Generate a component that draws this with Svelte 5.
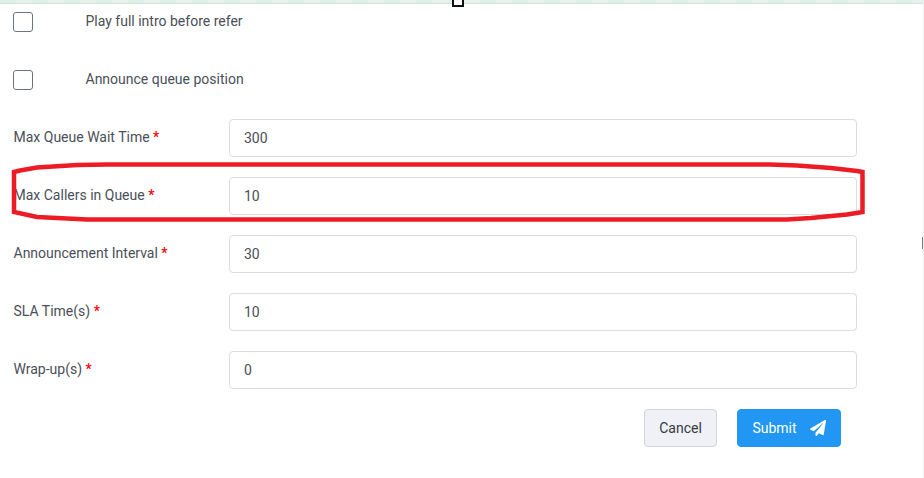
<script lang="ts">
  const options = ['Play full intro before refer', 'Announce queue position'];

  const fields = [
    { label: 'Max Queue Wait Time', value: '300' },
    { label: 'Max Callers in Queue', value: '10' },
    { label: 'Announcement Interval', value: '30' },
    { label: 'SLA Time(s)', value: '10' },
    { label: 'Wrap-up(s)', value: '0' }
  ];

  // hand-drawn annotation around the second field
  const outline =
    '14,172 20,170.5 37,167.5 77,165 107,164.5 770,164.5 797,165.5 831,168 857,171 862.5,172 862.5,212 847,214.5 811,218 787,219.5 87,219.5 37,217 14,212';
</script>

<div class="page">
  <div class="strip"></div>
  <div class="handle"></div>

  <form class="form" onsubmit={(e) => e.preventDefault()}>
    {#each options as option}
      <label class="row option">
        <input class="check" type="checkbox" />
        <span>{option}</span>
      </label>
    {/each}

    {#each fields as field}
      <label class="row">
        <span class="label">{field.label} <em>*</em></span>
        <input class="input" type="text" value={field.value} />
      </label>
    {/each}

    <div class="actions">
      <button class="btn cancel" type="button">Cancel</button>
      <button class="btn submit" type="submit">
        Submit
        <svg width="16" height="16" viewBox="0 0 512 512" aria-hidden="true">
          <path fill="currentColor" d="M476 3.2L12.5 270.6c-18.1 10.4-15.8 35.6 2.2 43.2L121 358.4l287.3-253.2c5.5-4.9 13.3 2.6 8.6 8.3L176 407v80.5c0 23.6 28.5 32.9 42.5 15.8L282 426l124.6 52.2c14.2 6 30.4-2.9 33-18.2l72-432C515 7.8 493.3-6.8 476 3.2z" />
        </svg>
      </button>
    </div>
  </form>

  <svg class="annotation" width="924" height="478" aria-hidden="true">
    <polygon points={outline} fill="none" stroke="#ed1c24" stroke-width="4.5" />
  </svg>

  <div class="scroll-mark"></div>
</div>

<style>
  :global(body) {
    margin: 0;
    background: #fff;
  }

  .page {
    position: relative;
    width: 924px;
    height: 478px;
    overflow: hidden;
    background: #fff;
    font-family: Roboto, 'Liberation Sans', sans-serif;
    font-size: 14px;
    color: #495057;
    border-right: 1px solid #f0f0f0;
    box-sizing: border-box;
  }

  .strip {
    position: absolute;
    inset: 0 0 auto 0;
    height: 4px;
    background: repeating-linear-gradient(90deg, #dff0e8 0 16px, #e6f3ea 16px 32px);
    border-bottom: 1px solid #d5e3dc;
    box-sizing: border-box;
  }

  .handle {
    position: absolute;
    top: -3px;
    left: 452px;
    width: 8px;
    height: 6px;
    border: 2px solid #111;
    background: #fff;
  }

  .form {
    display: flex;
    flex-direction: column;
    gap: 20px;
    width: 844px;
    padding: 3px 0 0 13px;
  }

  .row {
    display: flex;
    align-items: center;
    height: 38px;
  }

  .option span {
    margin-left: 52.5px;
    margin-top: -2px;
  }

  .check {
    appearance: none;
    flex-shrink: 0;
    width: 20px;
    height: 20px;
    margin: 0 0 0;
    background: #fff;
    border: 1px solid #6c757d;
    border-radius: 3px;
  }

  .label {
    width: 216px;
    flex-shrink: 0;
    margin-top: -2px;
    padding-left: 0.5px;
    box-sizing: border-box;
  }

  .label em {
    color: #f00;
    font-style: normal;
    font-weight: 500;
  }

  .input {
    flex: 1;
    height: 38px;
    box-sizing: border-box;
    padding: 0 14px;
    font: inherit;
    color: #495057;
    background: #fff;
    border: 1px solid #dcdcdc;
    border-radius: 4px;
    outline: none;
  }

  .actions {
    display: flex;
    justify-content: flex-end;
    gap: 20px;
    padding-right: 16px;
  }

  .btn {
    display: flex;
    align-items: center;
    justify-content: center;
    height: 38px;
    box-sizing: border-box;
    font: inherit;
    border-radius: 4px;
  }

  .cancel {
    width: 73px;
    color: #343a40;
    background: #eff1f6;
    border: 1px solid #ced4da;
  }

  .submit {
    gap: 13px;
    width: 104px;
    color: #fff;
    background: #2196f3;
    border: 1px solid #2196f3;
  }

  .annotation {
    position: absolute;
    top: 0;
    left: 0;
    pointer-events: none;
  }

  .scroll-mark {
    position: absolute;
    top: 237px;
    right: 0;
    width: 1px;
    height: 12px;
    background: #777;
  }
</style>
